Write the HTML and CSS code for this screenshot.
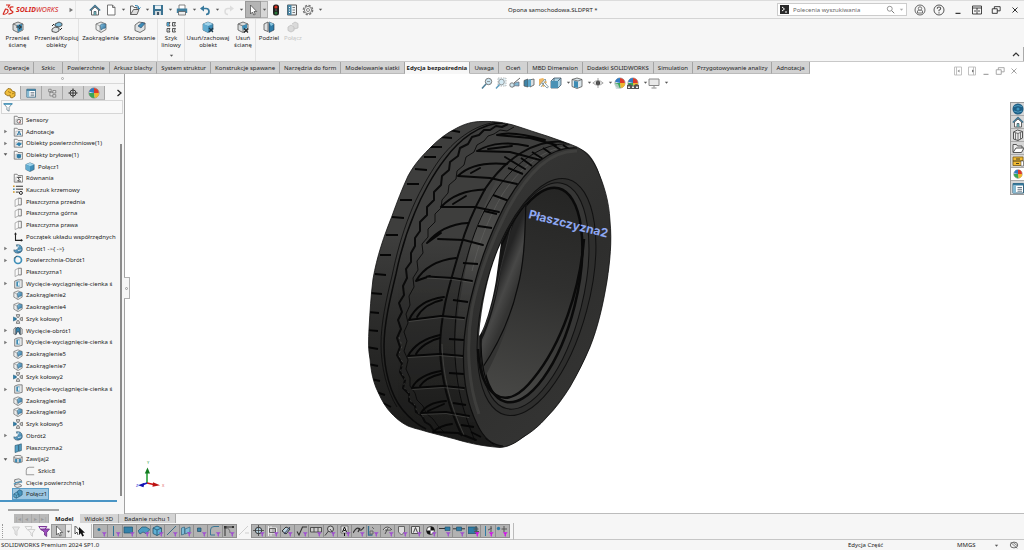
FILE: index.html
```html
<!DOCTYPE html>
<html lang="pl">
<head>
<meta charset="utf-8">
<title>Opona samochodowa.SLDPRT</title>
<link rel="stylesheet" href="styles.css">
</head>
<body>
<svg class="sprite" aria-hidden="true">
  <defs>
    <linearGradient id="gBlue" x1="0" y1="0" x2="1" y2="1"><stop offset="0" stop-color="#8cc6e4"/><stop offset="1" stop-color="#2a6f9c"/></linearGradient>
  </defs>
  <symbol id="cube" viewBox="0 0 12 12"><path d="M1 3l5-2 5 2v6l-5 2.500-5-2.500z" fill="#3f8db8" stroke="#2b4a5e" stroke-width=".6"/><path d="M1 3l5 2 5-2-5-2z" fill="#9fd3ea"/><path d="M1 3l5 2v6.500L1 9z" fill="#62acd0"/></symbol>
  <symbol id="gcube" viewBox="0 0 12 12"><path d="M1 3l5-2 5 2v6l-5 2.500-5-2.500z" fill="#d9dcdd" stroke="#555" stroke-width=".8"/><path d="M1 3l5 2 5-2M6 5v6.500" fill="none" stroke="#666" stroke-width=".8"/></symbol>
  <symbol id="moveface" viewBox="0 0 12 12"><use href="#gcube"/><path d="M5 4l5-1v6l-4 2z" fill="#3c8cb6"/><path d="M4 6h5M7 4l2.500 2L7 8" fill="none" stroke="#222" stroke-width=".9"/></symbol>
  <symbol id="movecopy" viewBox="0 0 12 12"><path d="M1 8l3-2 4 1v3l-3 1.500-4-1z" fill="#dfe3e5" stroke="#333" stroke-width=".8"/><path d="M4 3l4-2 3 1.500v2L8 6 4 5z" fill="#7fbcd9" stroke="#333" stroke-width=".8"/><path d="M1 5l2-2M11 7L9 9" stroke="#222"/></symbol>
  <symbol id="fillet" viewBox="0 0 12 12"><path d="M1 3l5-2 5 2v5.500l-5 3-5-3z" fill="#eceeee" stroke="#666" stroke-width=".8"/><path d="M5 4.500Q6 2 10.500 3v4Q8 7 6 9z" fill="url(#gBlue)" stroke="#2d6080" stroke-width=".6"/><path d="M1 3l4 2v6" fill="none" stroke="#777" stroke-width=".6"/></symbol>
  <symbol id="chamfer" viewBox="0 0 12 12"><path d="M1 4l4-3 6 1v6.500l-5 3-5-2z" fill="#dfe2e3" stroke="#555" stroke-width=".8"/><path d="M4 5l4-3.500 3 1L7 7z" fill="#3e8eb9" stroke="#235" stroke-width=".5"/></symbol>
  <symbol id="lpat" viewBox="0 0 12 12"><g fill="#dfe4e6" stroke="#333" stroke-width=".8"><path d="M2 1.500h3l-1 1.700 1 1.800H2zM7.500 1.500h3l-1 1.700 1 1.800h-3zM2 7.500h3l-1 1.700 1 1.800H2zM7.500 7.500h3l-1 1.700 1 1.800h-3z"/></g><path d="M2 1.500h2v3.500H2z" fill="#4b9bc4"/></symbol>
  <symbol id="delbody" viewBox="0 0 12 12"><use href="#cube"/><path d="M7 7l4 4M11 7l-4 4" stroke="#1d3a4c" stroke-width="1.300"/></symbol>
  <symbol id="delface" viewBox="0 0 12 12"><use href="#gcube"/><path d="M5 5l5-2v4l-4 2z" fill="#3c8cb6"/><path d="M7 7.500l4 4M11 7.500l-4 4" stroke="#222" stroke-width="1.100"/></symbol>
  <symbol id="split" viewBox="0 0 12 12"><path d="M1 3l4-2v9.500L1 9z" fill="#e0e2e3" stroke="#555" stroke-width=".8"/><path d="M6 1l5 2v6l-5 2.500z" fill="#2f7ca8" stroke="#234" stroke-width=".6"/><path d="M6 1l5 2-3 2z" fill="#8cc6e0"/></symbol>
  <symbol id="combineg" viewBox="0 0 12 12"><path d="M1 6l3-2 3 2v3.500L4 11 1 9.500zM5 3l3-2 3 1.500V7L7 8" fill="#dadada" stroke="#c0c0c0" stroke-width=".8"/></symbol>
  <symbol id="combine" viewBox="0 0 12 12"><path d="M5 3l3-2 3 1.500V7L8 9 5 7z" fill="#4694bd" stroke="#1c4c69" stroke-width=".7"/><path d="M1 6l3-2 3 2v3.500L4 11 1 9.500z" fill="#67b0d3" stroke="#1c4c69" stroke-width=".7"/><path d="M1 6l3 1.500L7 6M4 7.500V11" fill="none" stroke="#1c4c69" stroke-width=".6"/></symbol>
  <symbol id="home" viewBox="0 0 12 12"><path d="M2.500 6v5h7V6L6 3z" fill="#fff" stroke="#555" stroke-width=".9"/><path d="M.8 6.500L6 1.500l5.200 5" fill="none" stroke="#3b6f8b" stroke-width="1.400"/><path d="M5 11V7.500h2V11" fill="#7cc" stroke="#345" stroke-width=".7"/></symbol>
  <symbol id="new" viewBox="0 0 12 12"><path d="M2.500 1h5l2.500 2.500V11h-7.500z" fill="#fff" stroke="#666" stroke-width=".9"/><path d="M7.500 1v2.500H10" fill="none" stroke="#666" stroke-width=".9"/></symbol>
  <symbol id="open" viewBox="0 0 12 12"><path d="M1.500 10.500V2h2.500l1 1.500h3V6" fill="#f5f5f5" stroke="#555" stroke-width=".9"/><path d="M1.500 10.500l3-5H10l-2 5z" fill="#ddd" stroke="#555" stroke-width=".9"/><path d="M6 1.500q4-.5 4 3M8.500 3.500l1.500 1.500 1.500-1.500" stroke="#2c7fae" fill="none"/></symbol>
  <symbol id="save" viewBox="0 0 12 12"><path d="M1 1h10v10H1z" fill="#3b7392"/><path d="M3 1.500h6V5H3z" fill="#e9f1f5"/><path d="M3 7h6v4H3z" fill="#cfd8dc"/><path d="M5 8h2v3H5z" fill="#456"/></symbol>
  <symbol id="print" viewBox="0 0 12 12"><path d="M3 5V1h6v4" fill="#fff" stroke="#666" stroke-width=".8"/><path d="M.8 4.500h10.400v4.500H.8z" fill="#3f7f9f"/><path d="M2.500 7.500h7V11h-7z" fill="#eee" stroke="#555" stroke-width=".7"/></symbol>
  <symbol id="undo" viewBox="0 0 12 12"><path d="M2.500 4.500h4.500q3 0 3 3T7 10.500" fill="none" stroke="#37799d" stroke-width="1.700"/><path d="M5 1.500v6L1 4.500z" fill="#37799d"/></symbol>
  <symbol id="redo" viewBox="0 0 12 12"><path d="M9.500 4.500H5q-3 0-3 3t3 3" fill="none" stroke="#ddd" stroke-width="1.500"/><path d="M7 1.500v6l4-3z" fill="#ddd"/></symbol>
  <symbol id="cursor" viewBox="0 0 12 12"><path d="M3.500 1v9l2-2 1.300 3 1.400-.6L7 7.500h2.700z" fill="#fff" stroke="#444" stroke-width=".7"/></symbol>
  <symbol id="cursorset" viewBox="0 0 12 12"><path d="M1 1v8l2-2 1 3" fill="#fff" stroke="#333" stroke-width=".8"/><path d="M1.500 1l4 4.500" stroke="#333" stroke-width=".8"/><path d="M5 2v8l1.800-1.800L8.300 11.500l1.700-.8-1.500-3H11z" fill="#111"/></symbol>
  <symbol id="traffic" viewBox="0 0 12 12"><rect x="3" y=".5" width="6" height="11" rx="2.500" fill="#222"/><circle cx="6" cy="3" r="1.600" fill="#d32"/><circle cx="6" cy="6" r="1" fill="#555"/><circle cx="6" cy="9" r="1.500" fill="#2a7a3a"/></symbol>
  <symbol id="list" viewBox="0 0 12 12"><path d="M1.500 1h9v10h-9z" fill="#eef3f5" stroke="#555"/><path d="M1.500 1h4v10h-4z" fill="#4c87a5"/><path d="M3 3.500h1M3 6h1M3 8.500h1" stroke="#fff"/><path d="M6.500 3.500H9M6.500 6H9M6.500 8.500H9" stroke="#777"/></symbol>
  <symbol id="gear" viewBox="0 0 12 12"><circle cx="6" cy="6" r="4.600" fill="none" stroke="#777" stroke-width="1.500" stroke-dasharray="2.200 1.400"/><circle cx="6" cy="6" r="3.600" fill="#f7f7f7" stroke="#777" stroke-width=".9"/><circle cx="6" cy="6" r="1.500" fill="#fff" stroke="#777" stroke-width=".9"/></symbol>
  <symbol id="arr" viewBox="0 0 6 6"><path d="M1 2h4L3 4.500z" fill="#555"/></symbol>
  <symbol id="tri" viewBox="0 0 6 6"><path d="M1.500 .8v4.400L5 3z" fill="#777"/></symbol>
  <symbol id="trid" viewBox="0 0 6 6"><path d="M.8 1.500h4.400L3 4.500z" fill="#555"/></symbol>
  <symbol id="chev" viewBox="0 0 8 8"><path d="M2.500 1L6 4 2.500 7" fill="none" stroke="#222" stroke-width="1.300"/></symbol>
  <symbol id="mag" viewBox="0 0 12 12"><circle cx="5" cy="5" r="3.300" fill="none" stroke="#777"/><path d="M7.500 7.500l3.500 3.500" stroke="#777" stroke-width="1.300"/></symbol>
  <symbol id="user" viewBox="0 0 12 12"><circle cx="6" cy="6" r="5" fill="none" stroke="#666"/><path d="M3.500 9V7q0-1 2.500-1t2.500 1v2z" fill="none" stroke="#666" stroke-width=".9"/><circle cx="6" cy="4.500" r="1.700" fill="#f7f7f7" stroke="#666" stroke-width=".9"/></symbol>
  <symbol id="help" viewBox="0 0 12 12"><circle cx="6" cy="6" r="5" fill="none" stroke="#555"/><path d="M4.300 4.700Q4.300 3 6 3t1.700 1.500Q7.700 5.500 6 6.300v1M6 8.200v1.200" fill="none" stroke="#555" stroke-width="1.100"/></symbol>
  <symbol id="min" viewBox="0 0 12 12"><path d="M3 10h6" stroke="currentColor" stroke-width="1.300"/></symbol>
  <symbol id="span" viewBox="0 0 12 12"><path d="M1.500 2h9v8h-9zM1.500 4h9M6 4v6M3 7h2M7 7h2" fill="none" stroke="currentColor" stroke-width=".8"/></symbol>
  <symbol id="restore" viewBox="0 0 12 12"><path d="M1.500 4.500h6v5.500h-6zM4 4.500V2h7v5H7.500" fill="none" stroke="currentColor" stroke-width="1"/></symbol>
  <symbol id="close" viewBox="0 0 12 12"><path d="M3 3l6 6M9 3L3 9" stroke="currentColor" stroke-width="1.100"/></symbol>
  <symbol id="dockl" viewBox="0 0 12 12"><path d="M2.500 2h7v8h-7zM4.500 2v8" fill="none" stroke="#bbb" stroke-width=".9"/><path d="M7.500 4.500v3L5.500 6z" fill="#888"/></symbol>
  <symbol id="dockr" viewBox="0 0 12 12"><path d="M2.500 2h7v8h-7zM7.500 2v8" fill="none" stroke="#bbb" stroke-width=".9"/><path d="M6 4.500v3L8 6z" fill="#777"/></symbol>
  <symbol id="zoomfit" viewBox="0 0 12 12"><circle cx="7.500" cy="4.500" r="3.200" fill="#cde6f2" stroke="#777"/><path d="M5 7l-4 4.500" stroke="#4d7d96" stroke-width="1.500"/><path d="M6 4.500h3" stroke="#777" stroke-width=".7"/></symbol>
  <symbol id="zoomarea" viewBox="0 0 12 12"><path d="M3 1h8v8H3z" fill="#e6f3f8" stroke="#aaa" stroke-width=".8" stroke-dasharray="1.500 1"/><circle cx="6.500" cy="5" r="2.800" fill="#d4eaf4" stroke="#888" stroke-width=".8"/><path d="M4.500 7.500l-3.500 4" stroke="#5b9cbd" stroke-width="1.400"/></symbol>
  <symbol id="prevview" viewBox="0 0 12 12"><path d="M3 10q2-5 7-5v4q-4-1-7 1z" fill="#7fb7d2" stroke="#667" stroke-width=".7"/><path d="M11 1L5 6" stroke="#666"/><circle cx="3" cy="8" r="2.200" fill="#cfe5ef" stroke="#666" stroke-width=".8"/></symbol>
  <symbol id="section" viewBox="0 0 12 12"><path d="M1 3.500l4-1.500v8l-4-1z" fill="#3f83a6" stroke="#555" stroke-width=".7"/><path d="M6 3l5-1v6l-4 2z" fill="#d9dfe2" stroke="#555" stroke-width=".8"/><path d="M5 3l3-1v7l-3 1z" fill="#5ba4c8"/></symbol>
  <symbol id="annview" viewBox="0 0 12 12"><path d="M2 2l4-1 4 4-3 5-5-2z" fill="#efb765"/><path d="M2 9l6-7 1 1-5 7M5 6l5 5 1.500-1L8 6" fill="#fff" stroke="#6f8d9b" stroke-width=".8"/></symbol>
  <symbol id="orient" viewBox="0 0 12 12"><path d="M1 4l3-3h7v7l-3 3H1z" fill="#a9d0e2" stroke="#456" stroke-width=".8"/><path d="M1 4h7v7H1z" fill="#4a91b5"/><path d="M8 4l3-3M4 1v3" stroke="#456" stroke-width=".8"/></symbol>
  <symbol id="display" viewBox="0 0 12 12"><path d="M1 2.500L6 1l5 1.500v7L6 11.500 1 9.500z" fill="#dbe5ea" stroke="#555" stroke-width=".8"/><path d="M3 4l4 .6V11l-4-1z" fill="#3e8cb4"/><path d="M1 2.500L7 4l4-1.500" fill="none" stroke="#555" stroke-width=".7"/></symbol>
  <symbol id="eye" viewBox="0 0 12 12"><path d="M.8 6Q6 1 11.200 6 6 10.500.8 6z" fill="#e5e5e5" stroke="#999" stroke-width=".8"/><circle cx="6" cy="6" r="2.200" fill="#444"/><path d="M6 1v10" stroke="#777" stroke-width=".7"/></symbol>
  <symbol id="ball" viewBox="0 0 12 12"><circle cx="6" cy="6" r="5" fill="#fff" stroke="#555" stroke-width=".6"/><path d="M6 6L6 1A5 5 0 0 0 1.200 5z" fill="#2f7cc4"/><path d="M6 6V1a5 5 0 0 1 4.800 5z" fill="#dc3a2b"/><path d="M6 6h5a5 5 0 0 1-4.500 5z" fill="#f0b62c"/><path d="M6 6L1 6a5 5 0 0 0 5.500 5z" fill="#3aa556"/></symbol>
  <symbol id="ballp" viewBox="0 0 12 12"><use href="#ball"/><path d="M0 6l4 1 2 5H2z" fill="#c7d4da" opacity=".8"/></symbol>
  <symbol id="scene" viewBox="0 0 12 12"><use href="#ball"/><path d="M0 8l3-1 3 2 3-2 3 1v4H0z" fill="#555"/><path d="M1 9.500h2v1.500H1zM5 9.500h2v1.500H5zM9 9.500h2v1.500H9z" fill="#eee"/></symbol>
  <symbol id="monitor" viewBox="0 0 12 12"><path d="M1 2h10v6.500H1z" fill="#e9e9e9" stroke="#888"/><path d="M6 8.500v2M3.500 11h5" stroke="#888"/></symbol>
  <symbol id="part" viewBox="0 0 12 12"><path d="M1 5l3-3.500 3 .5 1 2 3 1v4l-3 2-2-1V8L4 9 1 7z" fill="#f0bd3c" stroke="#8b6410" stroke-width=".8"/><path d="M4 4.500l3 1.500M8 7l2-1" stroke="#8b6410" stroke-width=".7"/></symbol>
  <symbol id="conf" viewBox="0 0 12 12"><path d="M2 1.500h3v3H2zM7 3h3.500v3H7zM7 8h3.500v3H7zM3.500 4.500v5H7M3.500 5H7" fill="#e3e3e3" stroke="#666" stroke-width=".8"/></symbol>
  <symbol id="target" viewBox="0 0 12 12"><circle cx="6" cy="6" r="3.600" fill="none" stroke="#222"/><path d="M6 .5v11M.5 6h11" stroke="#222"/></symbol>
  <symbol id="funnelb" viewBox="0 0 12 12"><path d="M1 2h10L7.300 6.500V11l-2.600-1.500v-3z" fill="#fff" stroke="#4c6675" stroke-width=".8"/><path d="M.8 1.500h10.400v1.800H.8z" fill="#3d93bd"/></symbol>
  <symbol id="fold" viewBox="0 0 12 12"><path d="M1.500 11V1.500h3.500l1 1.500h5.500v8z" fill="#fafafa" stroke="#666" stroke-width=".9"/><path d="M3.500 11V5h8" fill="none" stroke="#999" stroke-width=".7"/></symbol>
  <symbol id="fsens" viewBox="0 0 12 12"><use href="#fold"/><circle cx="7" cy="7.500" r="2.200" fill="#fff" stroke="#555"/><path d="M7 7.500l2 2" stroke="#c33"/></symbol>
  <symbol id="fann" viewBox="0 0 12 12"><use href="#fold"/><path d="M5 10l2.300-5 2.300 5M6 8.500h3" fill="none" stroke="#246f9b" stroke-width="1.100"/></symbol>
  <symbol id="fsurf" viewBox="0 0 12 12"><use href="#fold"/><path d="M3.500 7.500L7 5l4 2-3.500 3z" fill="#2f81ad"/></symbol>
  <symbol id="fsol" viewBox="0 0 12 12"><use href="#fold"/><path d="M4.500 5.500L7 4.700l2.800.8v3.500L7 10.300 4.500 9z" fill="#2f7ba5"/></symbol>
  <symbol id="feq" viewBox="0 0 12 12"><use href="#fold"/><path d="M9.500 5.200h-4L7.500 7.500 5.500 9.700h4" fill="none" stroke="#222"/></symbol>
  <symbol id="mat" viewBox="0 0 12 12"><path d="M0 1.500h2M0 8.500h2" stroke="#d19a2a" stroke-width="1.800"/><path d="M0 5h2" stroke="#3d86ad" stroke-width="1.800"/><path d="M3.500 1.500H12M3.500 5H12M3.500 8.500H7" stroke="#333" stroke-width="1.200"/><circle cx="9.500" cy="9.500" r="1.800" fill="#fff" stroke="#222" stroke-width="1.200"/></symbol>
  <symbol id="plane" viewBox="0 0 12 12"><path d="M2.500 3.500l4-2v8l-4 2z" fill="#fafafa" stroke="#999" stroke-width=".9"/><path d="M6.500 1.500H10v8H6.500" fill="none" stroke="#666" stroke-width="1"/></symbol>
  <symbol id="planeb" viewBox="0 0 12 12"><path d="M2.500 3l4-1v8l-4 1.500zM7 2l3-1v8L7 10z" fill="#55a2c8" stroke="#245570" stroke-width=".8"/></symbol>
  <symbol id="origin" viewBox="0 0 12 12"><path d="M3 1.500V10h8" fill="none" stroke="#222" stroke-width="1.300"/><path d="M1.300 3L3 .2 4.700 3zM9.500 8.300L12 10l-2.500 1.700z" fill="#222"/></symbol>
  <symbol id="revolve" viewBox="0 0 12 12"><path d="M4 1q6-1 7 4t-5 6q-5 0-5-4 4 1 5-2Q5 4 4 1z" fill="url(#gBlue)" stroke="#2b4c60" stroke-width=".7"/><path d="M2 6.500Q6 6 6.500 2" fill="none" stroke="#fff"/><path d="M6 8l4-1" stroke="#dceef6"/></symbol>
  <symbol id="surfrev" viewBox="0 0 12 12"><circle cx="6" cy="6" r="4.200" fill="none" stroke="#3f8fb8" stroke-width="2"/><path d="M4 3q4 0 4 4" fill="none" stroke="#fff"/><path d="M1 4L5 1" stroke="#333" stroke-width=".8"/></symbol>
  <symbol id="cutex" viewBox="0 0 12 12"><path d="M2 2.500l4-1.500h5v9l-4 1H2z" fill="#e4e6e7" stroke="#555" stroke-width=".8"/><path d="M4 3h4v6H4z" fill="#3f8cb4"/><path d="M6 4h2v4H6z" fill="#e8f2f6"/></symbol>
  <symbol id="cpat" viewBox="0 0 12 12"><g fill="#e6e6e6" stroke="#444" stroke-width=".8"><path d="M4 .8h4L7 4H5zM4 11.200h4L7 8H5zM11.300 4v4L8.500 7V5z"/></g><path d="M.3 3.500v5L4 7V5z" fill="#2e7fab" stroke="#1c4c69" stroke-width=".5"/></symbol>
  <symbol id="cutrev" viewBox="0 0 12 12"><path d="M1 3.500l2.500-2v9l-2.500-1zM11 3.500l-2.500-2v9l2.500-1z" fill="#dfe3e5" stroke="#555" stroke-width=".8"/><path d="M3.500 10V3Q6 0 8.500 3v7L6 6z" fill="#3a86ae" stroke="#234" stroke-width=".7"/></symbol>
  <symbol id="wrap" viewBox="0 0 12 12"><path d="M1 3.500v6Q6 12 11 9.500v-6" fill="#d9dddf" stroke="#555" stroke-width=".8"/><ellipse cx="6" cy="3.500" rx="5" ry="1.800" fill="#f3f3f3" stroke="#555" stroke-width=".8"/><path d="M2.500 6h2.500v4H2.500zM7 6h2.500v4H7z" fill="#3a8ab4"/></symbol>
  <symbol id="sketch" viewBox="0 0 12 12"><path d="M11 1.500H5Q1.500 1.500 1.500 5v5.500H11" fill="none" stroke="#888"/></symbol>
  <symbol id="surfcut" viewBox="0 0 12 12"><path d="M2 2l5-1 3 1.500v2L5 6 2 5zM2 8l5-1 3 1.500v1.500l-5 1.500L2 10z" fill="#e3e5e6" stroke="#555" stroke-width=".8"/><path d="M1 7.500q5-4 10-2.500" fill="none" stroke="#3a8ab4" stroke-width="1.300"/></symbol>
  <symbol id="globe" viewBox="0 0 12 12"><circle cx="6" cy="6" r="5.500" fill="#1f5f86"/><path d="M2 3.500q4-2 8 0M2 8q4 2.500 8 0" stroke="#4f9cc0" fill="none"/><circle cx="6" cy="6" r="1.500" fill="#3d95bf"/></symbol>
  <symbol id="lib" viewBox="0 0 12 12"><path d="M1.500 3l4-2 5 1.500V9l-4.500 2.500-4.500-1.500z" fill="#e8e8e8" stroke="#555"/><path d="M1.500 3l4.500 1.500 4.500-2M6 4.500v7M3.500 4v7M8.500 3.500V10" stroke="#555" fill="none" stroke-width=".8"/></symbol>
  <symbol id="folder" viewBox="0 0 12 12"><path d="M1 10V2.500h3.500l1 1.500H10v2" fill="#eee" stroke="#555"/><path d="M1 10.500l3-4.500h8l-2.500 4.500z" fill="#fff" stroke="#555"/></symbol>
  <symbol id="palette" viewBox="0 0 12 12"><path d="M1 2h10v8.500H1z" fill="#f1bb35" stroke="#7b5a14" stroke-width=".8"/><path d="M1 6h10M4 4h4M4 8.500h3" stroke="#4c4120"/><path d="M9 6h2.500v5H9z" fill="#fff" stroke="#555" stroke-width=".6"/></symbol>
  <symbol id="props" viewBox="0 0 12 12"><path d="M1 1.500h10.500v9.500H1z" fill="#fff" stroke="#35647e"/><path d="M1 1.500h10.500v2H1z" fill="#35799d"/><path d="M1 3.500h3V11H1z" fill="#85b9d2"/><path d="M5.500 5.500h4.500M5.500 7.300h4.500M5.500 9.200h4.500" stroke="#456" stroke-width=".8"/></symbol>
  <symbol id="fg" viewBox="0 0 12 12"><path d="M2.500 2h7L7 6v4.500L5 9V6z" fill="#e9e9e9" stroke="#d0d0d0"/></symbol>
  <symbol id="fgs" viewBox="0 0 12 12"><path d="M1 1.500h7L6.500 5M1 1.500l3 4M4 4.500h7L8.500 8v3.500L7 10V8z" fill="#f4f4f4" stroke="#d0d0d0"/></symbol>
  <symbol id="fp" viewBox="0 0 12 12"><path d="M.8 1.500h8L7 4.500M.8 1.500L3.500 5.500" fill="#e2c5ee" stroke="#7b3597"/><path d="M3 4h8.500L8.700 7.500v4L6.500 10V7.500z" fill="#9b4bbb" stroke="#5f2379" stroke-width=".7"/></symbol>
  <symbol id="pf" viewBox="0 0 12 12"><path d="M6.800 7.200h4.900L9.900 9.300v2.500L8.600 11V9.300z" fill="#a04fd0"/></symbol>
  <symbol id="pm" viewBox="0 0 12 12"><path d="M6.800 7.200h4.900L9.900 9.300v2.500L8.600 11V9.300z" fill="#d010e8"/></symbol>
  <symbol id="k1" viewBox="0 0 12 12"><circle cx="4" cy="4.500" r="1.500" fill="#2e7396"/><use href="#pf"/></symbol>
  <symbol id="k2" viewBox="0 0 12 12"><path d="M4.500 1v10" stroke="#2e7396"/><use href="#pf"/></symbol>
  <symbol id="k3" viewBox="0 0 12 12"><path d="M1 2h8.500v6H1z" fill="#3382aa" stroke="#24546d" stroke-width=".7"/><use href="#pf"/></symbol>
  <symbol id="k4" viewBox="0 0 12 12"><path d="M0 6l4-4 4 0 4 2.500-4 4-3-1.500-3 2z" fill="#4b9bc1" stroke="#24546d" stroke-width=".7"/><use href="#pf"/></symbol>
  <symbol id="k5" viewBox="0 0 12 12"><path d="M1 3l4-2 4.500 2v5L5 10.500 1 8.500z" fill="#5fb0d4" stroke="#24546d" stroke-width=".8"/><path d="M1 3l4 2 4.500-2M5 5v5.500" fill="none" stroke="#24546d" stroke-width=".8"/><use href="#pf"/></symbol>
  <symbol id="k6" viewBox="0 0 12 12"><path d="M1 10L10 1" stroke="#3c6d86"/><use href="#pf"/></symbol>
  <symbol id="k7" viewBox="0 0 12 12"><path d="M1.500 3l3-1v7l-3 1zM5 4l5-2v5l-5 2z" fill="#7fbbd7" stroke="#3c6d86" stroke-width=".8"/><use href="#pf"/></symbol>
  <symbol id="k8" viewBox="0 0 12 12"><path d="M2.500 3h3.500v3.500H2.500z" fill="#3d86ab" stroke="#1f4d66" stroke-width=".7"/><use href="#pf"/></symbol>
  <symbol id="k9" viewBox="0 0 12 12"><path d="M10 1.500H5Q1.500 1.500 1.500 5v5H6" fill="none" stroke="#3c7796"/><use href="#pf"/></symbol>
  <symbol id="k10" viewBox="0 0 12 12"><path d="M2 11V2h8.500" fill="none" stroke="#333"/><path d="M1 1h2.500v2.500H1zM9 1h2v2H9z" fill="#333"/><path d="M3 3q4 0 4 5" fill="none" stroke="#555" stroke-width=".7"/><use href="#pf"/></symbol>
  <symbol id="k11" viewBox="0 0 12 12"><path d="M1 10L10 1M7 8h4" stroke="#cfcfcf"/></symbol>
  <symbol id="k12" viewBox="0 0 12 12"><circle cx="5.500" cy="5.500" r="3.200" fill="#b9d6e4" stroke="#333"/><path d="M5.500 0v11M0 5.500h11" stroke="#333" stroke-width=".7"/><use href="#pf"/></symbol>
  <symbol id="k13" viewBox="0 0 12 12"><path d="M1.500 1v10M1.500 3h8v5h-8M4 1v10" fill="none" stroke="#eee"/><path d="M2.500 3.500h6v4h-6z" fill="none" stroke="#444" stroke-width=".8"/><use href="#pf"/></symbol>
  <symbol id="k14" viewBox="0 0 12 12"><path d="M1 6l4-4 4 2-4 5z" fill="#bcd3de" stroke="#333"/><path d="M3 9L9 2" stroke="#346"/><use href="#pf"/></symbol>
  <symbol id="k15" viewBox="0 0 12 12"><path d="M1 6.500l2 3.500L6.500 2H11" fill="none" stroke="#333" stroke-width="1.100"/><use href="#pf"/></symbol>
  <symbol id="k16" viewBox="0 0 12 12"><path d="M.5 2.500h11v4.500H.5zM4 2.500V7M8 2.500V7" fill="#ccc" stroke="#444" stroke-width=".9"/><use href="#pf"/></symbol>
  <symbol id="k17" viewBox="0 0 12 12"><circle cx="6.500" cy="4" r="3" fill="#d2d2d2" stroke="#444"/><path d="M4.500 6L1 10.500M6 4l3 4" stroke="#444"/><use href="#pf"/></symbol>
  <symbol id="k18" viewBox="0 0 12 12"><path d="M2 1h7v7H2z" fill="#ddd" stroke="#555" stroke-width=".7"/><path d="M3.500 7l2-5 2 5M4.500 5.500h2M5.500 8v3" fill="none" stroke="#111"/><use href="#pf"/></symbol>
  <symbol id="k19" viewBox="0 0 12 12"><path d="M0 8q4-7 6-4t5-2M5 7l2-4" fill="none" stroke="#333" stroke-width="1.200"/><use href="#pf"/></symbol>
  <symbol id="k20" viewBox="0 0 12 12"><path d="M1.500 1v9h4" fill="none" stroke="#346d8c" stroke-width="1.300"/><path d="M3 6h3v3H3zM5 2l2 2" fill="none" stroke="#666"/><use href="#pf"/></symbol>
  <symbol id="k21" viewBox="0 0 12 12"><path d="M1 5q4-6 9 0M3 5h6M3 9l3-6" fill="#ddd" stroke="#444" stroke-width=".9"/><use href="#pf"/></symbol>
  <symbol id="k22" viewBox="0 0 12 12"><path d="M2.500 1.500h6V7l-3 3-3-3z" fill="#ddd" stroke="#666"/><use href="#pf"/></symbol>
  <symbol id="k23" viewBox="0 0 12 12"><path d="M1.500 1.500h8v7h-8z" fill="#e2e2e2" stroke="#555"/><path d="M3.500 7.500l2-5 2 5" fill="none" stroke="#444"/><use href="#pf"/></symbol>
  <symbol id="k24" viewBox="0 0 12 12"><circle cx="5.500" cy="5.500" r="4" fill="#fff" stroke="#222" stroke-width=".8"/><path d="M5.500 5.500v-4a4 4 0 0 1 4 4zM5.500 5.500v4a4 4 0 0 1-4-4z" fill="#111"/><use href="#pf"/></symbol>
  <symbol id="k25" viewBox="0 0 12 12"><path d="M0 3.500h7" stroke="#333"/><path d="M6 2h5v3.500H6z" fill="#2f7ca5" stroke="#1f4d66" stroke-width=".6"/><use href="#pf"/></symbol>
  <symbol id="k26" viewBox="0 0 12 12"><path d="M0 3.800h12" stroke="#333"/><path d="M3.500 2h5v3.700h-5z" fill="#2f7ca5" stroke="#1f4d66" stroke-width=".6"/><use href="#pf"/></symbol>
  <symbol id="k27" viewBox="0 0 12 12"><path d="M0 2h9v6.500H0z" fill="#2f7ca5" stroke="#1f4d66" stroke-width=".7"/><path d="M8 1v8M5.500 4h5M6 6.500h5" stroke="#555"/><use href="#pm"/></symbol>
  <symbol id="k28" viewBox="0 0 12 12"><path d="M3.500 1v10" stroke="#2f7ca5"/><path d="M9 1v6M6 5l4-2" stroke="#555"/><use href="#pm"/></symbol>
  <symbol id="k29" viewBox="0 0 12 12"><circle cx="2.500" cy="3.500" r="1.700" fill="#2f7ca5"/><path d="M8 1v6M5.500 4H11" stroke="#555"/><use href="#pm"/></symbol>
</svg>

<header class="titlebar">
  <div class="brand">
    <svg class="ds" viewBox="0 0 12 12" aria-hidden="true"><path d="M4 1h3.500L6 3.500M1 10.500L3.500 5q3 0 2.500 2.500T1 10.500M11.500 3q-4-.5-3.500 1.500t2.500 3-4 2.700" fill="none" stroke="#d5281e" stroke-width="1.200"/></svg>
    <span class="solid">SOLID</span><span class="works">WORKS</span>
  </div>
  <button class="more" aria-label="Menu"><svg class="i6"><use href="#tri"/></svg></button>
  <nav class="quick" aria-label="Szybki dostęp">
    <button class="ic" aria-label="Początek"><svg class="i12"><use href="#home"/></svg></button>
    <div class="pairs">
      <button><svg class="i12"><use href="#new"/></svg><svg class="i5"><use href="#arr"/></svg></button>
      <button><svg class="i12"><use href="#open"/></svg><svg class="i5"><use href="#arr"/></svg></button>
      <button><svg class="i12"><use href="#save"/></svg><svg class="i5"><use href="#arr"/></svg></button>
      <button><svg class="i12"><use href="#print"/></svg><svg class="i5"><use href="#arr"/></svg></button>
      <button><svg class="i12"><use href="#undo"/></svg><svg class="i5"><use href="#arr"/></svg></button>
      <button disabled><svg class="i12"><use href="#redo"/></svg><svg class="i5"><use href="#arr"/></svg></button>
    </div>
    <button class="sel"><svg class="i12"><use href="#cursor"/></svg></button><button class="seldrop"><svg class="i5"><use href="#arr"/></svg></button>
    <button class="ic"><svg class="i12"><use href="#traffic"/></svg></button>
    <button class="ic"><svg class="i12"><use href="#list"/></svg></button>
    <button class="ic"><svg class="i12"><use href="#gear"/></svg></button>
    <button class="geard"><svg class="i5"><use href="#arr"/></svg></button>
  </nav>
  <h1 class="doc">Opona samochodowa.SLDPRT *</h1>
  <div class="search">
    <svg class="i9" viewBox="0 0 9 9" aria-hidden="true"><path d="M0 0h9v9H0z" fill="#2a2a2a"/><path d="M2 2l2.500 2L2 6M5 7h2" fill="none" stroke="#fff"/></svg>
    <input type="text" aria-label="Polecenia wyszukiwania" placeholder="Polecenia wyszukiwania">
    <svg class="i9"><use href="#mag"/></svg><svg class="i5 dim"><use href="#arr"/></svg>
  </div>
  <div class="winctl">
    <button aria-label="Konto"><svg class="i12"><use href="#user"/></svg></button>
    <button aria-label="Pomoc"><svg class="i12"><use href="#help"/></svg></button>
    <button aria-label="Minimalizuj"><svg class="i10"><use href="#min"/></svg></button>
    <button aria-label="Rozciągnij"><svg class="i12"><use href="#span"/></svg></button>
    <button aria-label="Przywróć"><svg class="i10"><use href="#restore"/></svg></button>
    <button aria-label="Zamknij"><svg class="i10"><use href="#close"/></svg></button>
  </div>
</header>

<section class="ribbon">
  <div class="rgroup">
    <button class="rb w35"><svg class="i12"><use href="#moveface"/></svg><span>Przenieś<br>ścianę</span></button>
    <button class="rb w42"><svg class="i12"><use href="#movecopy"/></svg><span>Przenieś/Kopiuj<br>obiekty</span></button>
  </div>
  <div class="rgroup">
    <button class="rb w42"><svg class="i12"><use href="#fillet"/></svg><span>Zaokrąglenie</span></button>
    <button class="rb w35"><svg class="i12"><use href="#chamfer"/></svg><span>Sfazowanie</span></button>
  </div>
  <div class="rgroup">
    <button class="rb w26"><svg class="i12"><use href="#lpat"/></svg><span>Szyk<br>liniowy</span><svg class="i5 rdrop"><use href="#arr"/></svg></button>
  </div>
  <div class="rgroup">
    <button class="rb w46"><svg class="i12"><use href="#delbody"/></svg><span>Usuń/zachowaj<br>obiekt</span></button>
    <button class="rb w24"><svg class="i12"><use href="#delface"/></svg><span>Usuń<br>ścianę</span></button>
  </div>
  <div class="rgroup last">
    <button class="rb w24"><svg class="i12"><use href="#split"/></svg><span>Podziel</span></button>
    <button class="rb w24" disabled><svg class="i12"><use href="#combineg"/></svg><span>Połącz</span></button>
  </div>
  <button class="collapse" aria-label="Zwiń"><svg class="i8" viewBox="0 0 8 8"><path d="M1 6l3-3 3 3" fill="none" stroke="#333" stroke-width="1.200"/></svg></button>
</section>

<main class="work">
  <nav class="tabs" role="tablist">
    <button role="tab">Operacje</button><button role="tab">Szkic</button><button role="tab">Powierzchnie</button><button role="tab">Arkusz blachy</button><button role="tab">System struktur</button><button role="tab">Konstrukcje spawane</button><button role="tab">Narzędzia do form</button><button role="tab">Modelowanie siatki</button><button role="tab" class="on" aria-selected="true">Edycja bezpośrednia</button><button role="tab">Uwaga</button><button role="tab">Oceń</button><button role="tab">MBD Dimension</button><button role="tab">Dodatki SOLIDWORKS</button><button role="tab">Simulation</button><button role="tab">Przygotowywanie analizy</button><button role="tab">Adnotacja</button>
  </nav>
  <div class="split">
    <aside class="panel">
      <div class="grip"><i></i></div>
      <div class="ptabs">
        <button class="on"><svg class="i12"><use href="#part"/></svg></button><button><svg class="i10"><use href="#props"/></svg></button><button><svg class="i10"><use href="#conf"/></svg></button><button><svg class="i10"><use href="#target"/></svg></button><button><svg class="i12"><use href="#ball"/></svg></button>
        <button class="pmore" aria-label="Więcej"><svg class="i8"><use href="#chev"/></svg></button>
      </div>
      <div class="filter"><svg class="i10"><use href="#funnelb"/></svg></div>
      <div class="treebox">
        <div class="tree" role="tree">
          <div class="row" role="treeitem"><b></b><svg class="i10"><use href="#fsens"/></svg><span>Sensory</span></div>
          <div class="row" role="treeitem"><b><svg class="i5"><use href="#tri"/></svg></b><svg class="i10"><use href="#fann"/></svg><span>Adnotacje</span></div>
          <div class="row" role="treeitem"><b><svg class="i5"><use href="#tri"/></svg></b><svg class="i10"><use href="#fsurf"/></svg><span>Obiekty powierzchniowe(1)</span></div>
          <div class="row" role="treeitem"><b><svg class="i5"><use href="#trid"/></svg></b><svg class="i10"><use href="#fsol"/></svg><span>Obiekty bryłowe(1)</span></div>
          <div class="row kid" role="treeitem"><b></b><svg class="i10"><use href="#cube"/></svg><span>Połącz1</span></div>
          <div class="row" role="treeitem"><b></b><svg class="i10"><use href="#feq"/></svg><span>Równania</span></div>
          <div class="row" role="treeitem"><b></b><svg class="i10"><use href="#mat"/></svg><span>Kauczuk krzemowy</span></div>
          <div class="row" role="treeitem"><b></b><svg class="i10"><use href="#plane"/></svg><span>Płaszczyzna przednia</span></div>
          <div class="row" role="treeitem"><b></b><svg class="i10"><use href="#plane"/></svg><span>Płaszczyzna górna</span></div>
          <div class="row" role="treeitem"><b></b><svg class="i10"><use href="#plane"/></svg><span>Płaszczyzna prawa</span></div>
          <div class="row" role="treeitem"><b></b><svg class="i10"><use href="#origin"/></svg><span>Początek układu współrzędnych</span></div>
          <div class="row" role="treeitem"><b><svg class="i5"><use href="#tri"/></svg></b><svg class="i10"><use href="#revolve"/></svg><span>Obrót1 -&gt;{ -&gt;}</span></div>
          <div class="row" role="treeitem"><b><svg class="i5"><use href="#tri"/></svg></b><svg class="i10"><use href="#surfrev"/></svg><span>Powierzchnia-Obrót1</span></div>
          <div class="row" role="treeitem"><b></b><svg class="i10"><use href="#plane"/></svg><span>Płaszczyzna1</span></div>
          <div class="row" role="treeitem"><b><svg class="i5"><use href="#tri"/></svg></b><svg class="i10"><use href="#cutex"/></svg><span>Wycięcie-wyciągnięcie-cienka ś</span></div>
          <div class="row" role="treeitem"><b></b><svg class="i10"><use href="#fillet"/></svg><span>Zaokrąglenie2</span></div>
          <div class="row" role="treeitem"><b></b><svg class="i10"><use href="#fillet"/></svg><span>Zaokrąglenie4</span></div>
          <div class="row" role="treeitem"><b></b><svg class="i10"><use href="#cpat"/></svg><span>Szyk kołowy1</span></div>
          <div class="row" role="treeitem"><b><svg class="i5"><use href="#tri"/></svg></b><svg class="i10"><use href="#cutrev"/></svg><span>Wycięcie-obrót1</span></div>
          <div class="row" role="treeitem"><b><svg class="i5"><use href="#tri"/></svg></b><svg class="i10"><use href="#cutex"/></svg><span>Wycięcie-wyciągnięcie-cienka ś</span></div>
          <div class="row" role="treeitem"><b></b><svg class="i10"><use href="#fillet"/></svg><span>Zaokrąglenie5</span></div>
          <div class="row" role="treeitem"><b></b><svg class="i10"><use href="#fillet"/></svg><span>Zaokrąglenie7</span></div>
          <div class="row" role="treeitem"><b></b><svg class="i10"><use href="#cpat"/></svg><span>Szyk kołowy2</span></div>
          <div class="row" role="treeitem"><b><svg class="i5"><use href="#tri"/></svg></b><svg class="i10"><use href="#cutex"/></svg><span>Wycięcie-wyciągnięcie-cienka ś</span></div>
          <div class="row" role="treeitem"><b></b><svg class="i10"><use href="#fillet"/></svg><span>Zaokrąglenie8</span></div>
          <div class="row" role="treeitem"><b></b><svg class="i10"><use href="#fillet"/></svg><span>Zaokrąglenie9</span></div>
          <div class="row" role="treeitem"><b></b><svg class="i10"><use href="#cpat"/></svg><span>Szyk kołowy5</span></div>
          <div class="row" role="treeitem"><b><svg class="i5"><use href="#tri"/></svg></b><svg class="i10"><use href="#revolve"/></svg><span>Obrót2</span></div>
          <div class="row" role="treeitem"><b></b><svg class="i10"><use href="#planeb"/></svg><span>Płaszczyzna2</span></div>
          <div class="row" role="treeitem"><b><svg class="i5"><use href="#trid"/></svg></b><svg class="i10"><use href="#wrap"/></svg><span>Zawijaj2</span></div>
          <div class="row kid" role="treeitem"><b></b><svg class="i10"><use href="#sketch"/></svg><span>Szkic8</span></div>
          <div class="row" role="treeitem"><b></b><svg class="i10"><use href="#surfcut"/></svg><span>Cięcie powierzchnią1</span></div>
          <div class="row" role="treeitem" aria-selected="true"><b></b><div class="picked"><svg class="i10"><use href="#combine"/></svg><span>Połącz1</span></div></div>
        </div>
        <div class="vbar"></div>
      </div>
      <div class="hbar"><i></i></div>
    </aside>

    <section class="view">
      <svg class="canvas" viewBox="125 75 899 439" preserveAspectRatio="xMidYMid meet" role="img" aria-label="Opona">
        <defs>
          <linearGradient id="body" x1="0" y1="0" x2="0" y2="1"><stop offset="0" stop-color="#3e3e3d"/><stop offset=".35" stop-color="#3e3e3d"/><stop offset=".6" stop-color="#2c2c2b"/><stop offset="1" stop-color="#191918"/></linearGradient>
          <linearGradient id="side" x1=".3" y1="0" x2=".7" y2="1"><stop offset="0" stop-color="#363635"/><stop offset=".5" stop-color="#2e2e2d"/><stop offset="1" stop-color="#353534"/></linearGradient>
          <linearGradient id="deck" x1="0" y1="0" x2="0" y2="1"><stop offset="0" stop-color="#252524"/><stop offset=".45" stop-color="#30302f"/><stop offset="1" stop-color="#484846"/></linearGradient>
          <linearGradient id="bead" gradientUnits="userSpaceOnUse" x1="497" y1="280" x2="517" y2="288"><stop offset="0" stop-color="#242424"/><stop offset=".5" stop-color="#484847"/><stop offset="1" stop-color="#343433"/></linearGradient>
          <linearGradient id="shoulder" gradientUnits="userSpaceOnUse" x1="0" y1="150" x2="0" y2="430"><stop offset="0" stop-color="#3b3b3a"/><stop offset=".35" stop-color="#555553"/><stop offset=".55" stop-color="#3b3b3a"/><stop offset="1" stop-color="#1e1e1d"/></linearGradient>
          <clipPath id="hole"><ellipse cx="532" cy="296" rx="44" ry="110" transform="rotate(14 532 296)"/></clipPath>
          <clipPath id="sil"><path id="outline" d="M482 122.500C496 122 505 124 513 126C526 130 537 134 547 137C558 141 568 144 577 148C587 153 592 160 597 170C604 186 609 202 610 222C612 243 610 262 607 282C603 306 598 328 590 348C584 362 578 374 570 388C563 399 556 409 547 418C539 427 532 433 523 438C516 444 508 448 500 448.500C480 447 465 443 455 440L428 433C418 430 413 429 408 427C400 423 396 419 392 415C386 409 382 402 378 393C373 383 371 372 370 360C368 350 368.500 340 369 330C370 312 371 296 373 280C377 257 384 237 392 217C397 203 402 190 408 177C415 164 423 156 432 147C439 140 447 134 455 130C464 125 472 122.500 482 122.500Z"/></clipPath>
        </defs>
        <use href="#outline" fill="url(#body)"/>
        <g clip-path="url(#sil)" fill="none" stroke-linejoin="round">
          <path d="M577 150C548 150 524 174 507 205C491 233 480 262 473 290C466 318 464 335 463 353C463 378 468 400 478 422L468 424C456 395 454 372 455 345C456 325 460 298 466 268C473 235 484 205 497 180C511 154 535 140 560 143Z" fill="url(#shoulder)" opacity=".75"/>
          <g stroke="#0b0b0b">
            <path d="M505 124C480 123 458 142 445 160C433 175 421 198 415 213C407 232 400 255 396 275C390 300 384 325 384 347C384 370 390 395 402 410C410 420 418 426 426 430" stroke-width="1.500"/>
            <path d="M500 123C474 124 452 144 440 160C429 175 416 199 410 215C402 235 396 257 392 277C386 301 381 325 381 345C381 368 387 392 397 408" stroke-width=".8"/>
            <path d="M508 125L502 128L496 127L490 131L484 131L479 136L472 138L468 145L460 149L458 157L450 163L449 171L442 177L441 186L434 193L434 201L427 208L427 216L420 223L420 232L415 239L415 247L411 254L411 263L406 270L407 279L403 287L404 296L399 304L402 313L398 321L401 330L397 339L400 348L397 356L402 365L400 373L405 381L403 389L409 395L409 402L415 407L416 413L422 417L425 423L430 426L434 432" stroke-width="2"/>
            <path d="M514 128L507 132L500 131L494 135L488 137L484 142L477 146L474 153L466 158L464 166L457 172L456 180L449 186L448 194L442 201L441 209L435 215L435 223L428 230L428 238L422 245L423 254L417 262L418 271L413 279L414 288L409 297L410 306L406 315L408 324L404 333L407 342L404 352L408 361L406 370L410 379L410 387L415 394L417 401L423 407L426 414L433 420L438 427L445 434" stroke-width=".9"/>
            <path d="M566 143C535 139 505 160 485 190C475 208 466 228 460 250C454 270 448 290 445 305C442 320 440 335 440 350C441 378 447 405 462 437" stroke-width="2"/>
            <path d="M570 145C543 143 516 163 497 190C485 208 476 228 470 248C463 272 458 292 456 315C454 340 454 360 458 385C461 405 467 422 475 442" stroke-width="1"/>
            <path d="M573 147C545 148 520 168 502 196C488 220 478 246 472 272" stroke="#6a6a68" stroke-width="1" opacity=".5"/>
          </g>
          <g stroke="#080808" stroke-width="1.900" stroke-linecap="round" stroke-linejoin="round">
            <path d="M497 136C510 132 528 136 545 141M497 136L530 139L556 146"/>
            <path d="M477 152C492 143 512 143 528 147M477 152L510 153L540 161M488 150L512 147"/>
            <path d="M458 177C468 167 485 163 507 165M458 177L490 179L517 185M471 174L480 169M505 158L525 170"/>
            <path d="M441 208C452 196 466 191 485 190.500M441 208L475 208L499 213M453 205L466 197"/>
            <path d="M427 244C437 232 449 225 468 224M438 240L464 241L483 246M427 244L441 234"/>
            <path d="M416 282C424 268 438 261 456 259M427 277.500L453 279L472 282M416 282L430 277"/>
            <path d="M409 321C415 308 427 300 444 298M409 321L441 317L464 319M417 318C422 309 432 303 442 301"/>
            <path d="M408 357C414 346 426 339 440 336M408 357L440 355L463 357M416 355C420 348 430 341 440 339"/>
            <path d="M412 389C416 380 428 374 441 372M412 389L443 387L464 389M420 387C424 381 432 377 441 375"/>
            <path d="M421 414C425 407 434 403 446 402M421 414L446 413L469 417M428 412L444 405"/>
            <path d="M433 433C438 428 444 426 452 425M433 433L458 434L476 441"/>
          </g>
          <g stroke="#656563" stroke-width=".7" opacity=".6">
            <path d="M409 322.500L441 318.500L464 320.500M408 358.500L440 356.500L463 358.500M412 390.500L443 388.500L464 390.500M421 415.500L446 414.500L469 418.500M427 279L453 280.500L472 283.500"/>
            <path d="M399 338L402 347L398.500 356L403 364L400.500 372L405 380L403.500 388L409 394L409.500 401L415 406L417 413L424 418" stroke-dasharray="2 3"/>
            <path d="M442 345C443 375 449 404 464 436"/>
          </g>
          <g stroke="#060606" stroke-width="1.900">
            <path d="M449 131l11 2M440 138l12 1M430 148l12 0M424 158l12 0M415 170l12 1M407 185l12 0M400 201l12 0M392 218l12 1M386 236l12 0M380 256l11 0M375 275l11 1M370 294l12 1M368 313l11 1M367 331l11 1M367 348l11 2M368 365l10 2M371 380l9 2M376 393l9 3M383 404l8 4"/>
            <path d="M493 196l16 6M478 227l14 2M463 264l15 1M453 301l15 2M449 340l15 1M449 374l15 1M453 404l13 2M461 426l13 2M508 169l15 6M532 153l11 7M553 146l11 7M573 149l6 7M521 159l11 8M543 149l10 7M563 146l9 6M484 212l13 3M471 433l10 5M486 439l8 6"/>
          </g>
        </g>
        <path d="M577 149C590 151 597 166 601 180C607 198 611 220 610.500 243C610 262 608 276 606 286C601 312 597 330 589 350C584 363 577 376 569 389C558 405 546 420 533 431C522 440 511 448 503 447C492 446 484 440 477 425C466 403 463 378 463.500 353C464 330 469 305 474 287C481 259 492 231 505 206C524 172 547 147 577 149Z" fill="url(#side)"/>
        <path d="M577 152C549 151 526 177 508 210C491 243 479 275 472 310C466 346 468 385 479 415" fill="none" stroke="#4b4b4a" stroke-width="3" opacity=".5"/>
        <path d="M577 149C547 147 524 172 505 206C492 231 481 259 474 287C469 305 464 330 463.500 353C463 378 466 403 477 425C484 440 492 446 503 447" fill="none" stroke="#0d0d0d" stroke-width="1.200"/>
        <ellipse cx="536.500" cy="298" rx="52" ry="122" transform="rotate(15 536.500 298)" fill="#2e2e2d" stroke="#111" stroke-width="1"/>
        <ellipse cx="534.500" cy="297" rx="48" ry="116" transform="rotate(14 534.500 297)" fill="#363635" stroke="#111" stroke-width="1"/>
        <ellipse cx="532" cy="296" rx="44" ry="110" transform="rotate(14 532 296)" fill="url(#deck)" stroke="#0a0a0a" stroke-width="2.500"/>
        <g clip-path="url(#hole)">
          <path d="M560 180C540 182 522 200 514 220C505 240 500 262 496 282C490 310 483 330 474 350L470 410L484 380C500 350 512 320 518 285C524 262 524 240 527 200Z" fill="url(#bead)"/>
          <path d="M526 200C525 230 525 260 518 287C511 318 498 348 476 378" fill="none" stroke="#0d0d0d" stroke-width="1.200"/>
          <path d="M535 190C514 206 504 236 498 270C494 300 486 328 474 350" fill="none" stroke="#161616" stroke-width="6"/>
          <path d="M514 216C507 245 502 262 499 278C494 304 487 326 478 342" fill="none" stroke="#444" stroke-width=".6"/>
        </g>
        <path d="M501 244C490 268 482 300 479 337C484 331 492 306 496 281Z" fill="#fff"/>
        <path d="M584 240C580 290 562 345 533 380C522 394 508 404 496 396C484 389 479 370 478 350" fill="none" stroke="#0a0a0a" stroke-width="2.500"/>
        <use href="#outline" fill="none" stroke="#111" stroke-width=".8"/>
        <text class="planename" transform="translate(528 219) rotate(14)">Płaszczyzna2</text>
        <g class="triad">
          <path d="M147 484V473" stroke="#1b9a2b" stroke-width="1.500"/><path d="M144.800 474.500l2.700-6 2.500 6z" fill="#127a20"/>
          <path d="M147 484l9 2" stroke="#c11" stroke-width="1.500"/><path d="M153 483.300l7 3-7.500 1.500z" fill="#b11"/>
          <path d="M147 484l-5 2" stroke="#1616c8" stroke-width="1.500"/><path d="M144.500 483.800l-6.500 2.500 5.500 2z" fill="#1212b0"/>
          <text x="147" y="465" fill="#3ba64b">Y</text><text x="162" y="488" fill="#d55">X</text><text x="136" y="488" fill="#2222cc">Z</text>
        </g>
      </svg>
      <div class="hud">
        <button><svg class="i12"><use href="#zoomfit"/></svg></button><button><svg class="i12"><use href="#zoomarea"/></svg></button><button><svg class="i12"><use href="#prevview"/></svg></button><button><svg class="i12"><use href="#section"/></svg></button><button><svg class="i12"><use href="#annview"/></svg></button>
        <button class="dd"><svg class="i12"><use href="#orient"/></svg><svg class="i5"><use href="#arr"/></svg></button><button class="dd"><svg class="i12"><use href="#display"/></svg><svg class="i5"><use href="#arr"/></svg></button><button class="dd"><svg class="i12"><use href="#eye"/></svg><svg class="i5"><use href="#arr"/></svg></button>
        <button><svg class="i12"><use href="#ballp"/></svg></button><button class="dd"><svg class="i12"><use href="#scene"/></svg><svg class="i5"><use href="#arr"/></svg></button><button class="dd"><svg class="i12"><use href="#monitor"/></svg><svg class="i5"><use href="#arr"/></svg></button>
      </div>
      <button class="handle" aria-label="Zwiń panel"><i></i></button>
      <div class="docctl">
        <button><svg class="i12"><use href="#dockl"/></svg></button><button><svg class="i12"><use href="#dockr"/></svg></button><button><svg class="i10"><use href="#min"/></svg></button><button><svg class="i10"><use href="#restore"/></svg></button><button><svg class="i10"><use href="#close"/></svg></button>
      </div>
      <nav class="taskpane">
        <button><svg class="i12"><use href="#globe"/></svg></button><button><svg class="i12"><use href="#home"/></svg></button><button><svg class="i12"><use href="#lib"/></svg></button><button><svg class="i12"><use href="#folder"/></svg></button><button><svg class="i12"><use href="#palette"/></svg></button><button class="on"><svg class="i10"><use href="#ball"/></svg></button><button><svg class="i12"><use href="#props"/></svg></button>
      </nav>
    </section>
  </div>
</main>

<nav class="mtabs">
  <div class="mnav"><button>|◂</button><button>◂</button><button>▸</button><button>▸|</button></div>
  <button class="on">Model</button><button>Widoki 3D</button><button>Badanie ruchu 1</button>
</nav>
<section class="filters">
  <i class="dots"></i>
  <button class="fl"><svg class="i12"><use href="#fg"/></svg></button><button class="fl"><svg class="i12"><use href="#fgs"/></svg></button><button class="fl"><svg class="i12"><use href="#fp"/></svg></button>
  <button class="fcur"><svg class="i12"><use href="#cursor"/></svg></button><button class="fdrop"><svg class="i5"><use href="#arr"/></svg></button>
  <button class="fset"><svg class="i12"><use href="#cursorset"/></svg></button>
  <i class="bar"></i>
  <div class="keys k10w"><button><svg class="i12"><use href="#k1"/></svg></button><button><svg class="i12"><use href="#k2"/></svg></button><button><svg class="i12"><use href="#k3"/></svg></button><button><svg class="i12"><use href="#k4"/></svg></button><button><svg class="i12"><use href="#k5"/></svg></button><button><svg class="i12"><use href="#k6"/></svg></button><button><svg class="i12"><use href="#k7"/></svg></button><button><svg class="i12"><use href="#k8"/></svg></button><button><svg class="i12"><use href="#k9"/></svg></button><button><svg class="i12"><use href="#k10"/></svg></button></div>
  <button class="fl"><svg class="i12"><use href="#k11"/></svg></button>
  <div class="keys k18w"><button><svg class="i12"><use href="#k12"/></svg></button><button><svg class="i12"><use href="#k13"/></svg></button><button><svg class="i12"><use href="#k14"/></svg></button><button><svg class="i12"><use href="#k15"/></svg></button><button><svg class="i12"><use href="#k16"/></svg></button><button><svg class="i12"><use href="#k17"/></svg></button><button><svg class="i12"><use href="#k18"/></svg></button><button><svg class="i12"><use href="#k19"/></svg></button><button><svg class="i12"><use href="#k20"/></svg></button><button><svg class="i12"><use href="#k21"/></svg></button><button><svg class="i12"><use href="#k22"/></svg></button><button><svg class="i12"><use href="#k23"/></svg></button><button><svg class="i12"><use href="#k24"/></svg></button><button><svg class="i12"><use href="#k25"/></svg></button><button><svg class="i12"><use href="#k26"/></svg></button><button><svg class="i12"><use href="#k27"/></svg></button><button><svg class="i12"><use href="#k28"/></svg></button><button><svg class="i12"><use href="#k29"/></svg></button></div>
  <i class="bar end"></i>
</section>
<footer class="status">
  <span>SOLIDWORKS Premium 2024 SP1.0</span>
  <span class="mode">Edycja Część</span>
  <button class="units">MMGS<svg class="i5"><use href="#arr"/></svg></button>
  <button class="tag" aria-label="Etykiety"><svg class="i10" viewBox="0 0 12 12"><ellipse cx="6" cy="6" rx="4.500" ry="3.500" fill="#eee" stroke="#555"/><path d="M2 3l8 7M5 3l5 4" stroke="#555" stroke-width=".8"/></svg></button>
</footer>
</body>
</html>
```
FILE: styles.css
```css
*{box-sizing:border-box}
body{margin:0;height:100vh;display:flex;flex-direction:column;background:#f6f6f6;color:#1c1c1c;font:6px/8px "Noto Sans","Open Sans",sans-serif;overflow:hidden}
button,input{font:inherit;color:inherit;border:0;background:none;padding:0;margin:0}
button{display:flex;align-items:center;justify-content:center;white-space:nowrap}
svg{display:block;flex:none}
.sprite{position:absolute;width:0;height:0}
.i5{width:5px;height:5px}
.i6{width:6px;height:6px}
.i8{width:8px;height:8px}
.i9{width:9px;height:9px}
.i10{width:10px;height:10px}
.i12{width:12px;height:12px}

.titlebar{flex:none;height:19px;display:flex;align-items:center;border-top:1px solid #dcdcdc;border-bottom:1px solid #d4d4d4}
.brand{width:66px;padding-left:2px;display:flex;align-items:center;color:#d5281e}
.ds{width:12px;height:12px;margin-right:2px}
.solid{font-weight:bold;font-style:italic;font-size:7px}
.works{font-style:italic;font-size:7px}
.more{width:10px;height:17px;border-right:1px solid #e6e6e6}
.quick{display:flex;align-items:center;padding-left:11px}
.ic{width:16px}
.pairs{width:141px;display:grid;grid-template-columns:repeat(6,1fr);margin-left:1px}
.pairs button{gap:4px}
.sel{width:16px;height:17px;background:#b4b4b4;border:1px solid #999}
.seldrop{width:7px;height:17px;background:#d6d6d6;border:1px solid #b0b0b0;border-left:0}
.geard{width:8px}
.doc{flex:1;margin:0;padding-left:184px;font-size:6px;font-weight:normal;white-space:nowrap}
.search{width:130px;height:13px;display:flex;align-items:center;gap:4px;background:#fff;border:1px solid #ccc;padding:0 2px}
.search input{flex:1;min-width:0}
.search input::placeholder{color:#666;opacity:1}
.dim{opacity:.5}
.winctl{display:flex;width:117px;padding-left:3px}
.winctl button{flex:1}

.ribbon{flex:none;height:43px;display:flex;border-bottom:1px solid #c8c8c8}
.rgroup{display:flex;border-right:1px solid #e2e2e2}
.rb{flex-direction:column;justify-content:flex-start;padding-top:2px;text-align:center;line-height:7px}
.rb span{margin-top:2px}
.rb[disabled]{color:#c4c4c4}
.w24{width:24px}
.w26{width:26px}
.w35{width:35px}
.w42{width:43px}
.w46{width:46px}
.rdrop{margin-top:4px}
.last{padding-left:1px;border:0}
.collapse{margin-left:auto;align-self:flex-end;width:15px;height:14px;border-right:1px solid #aaa}

.work{flex:1;min-height:0;display:flex;flex-direction:column;background:#fff}
.tabs{flex:none;height:12px;display:flex}
.tabs button{min-width:29px;height:12px;padding:0 4px;background:#d2d2d2;border-right:1px solid #a4a4a4;border-bottom:1px solid #bbb}
.tabs .on{padding:0 2px;background:#f7f7f7;font-weight:bold;border-bottom-color:#f7f7f7}
.split{flex:1;min-height:0;display:flex}
.panel{width:125px;flex:none;display:flex;flex-direction:column;background:#f6f6f6;border-right:1px solid #a2a2a2}
.grip{height:10px;display:flex;align-items:center;justify-content:center;border-bottom:1px solid #d8d8d8}
.grip i{width:3px;height:3px;border:1px solid #aaa;border-radius:50%}
.ptabs{height:16px;display:flex;padding-top:2px}
.ptabs button{width:21px;background:#d2d2d2;border-right:1px solid #a8a8a8;border-bottom:1px solid #bbb}
.ptabs .on{background:#f6f6f6;border-bottom-color:#f6f6f6}
.ptabs .pmore{width:auto;margin-left:auto;padding-right:1px;background:none;border:0}
.filter{height:14px;margin:0 1px;padding-left:1px;display:flex;align-items:center;background:#f9f9f9;border:1px solid #d6d6d6}
.treebox{flex:1;min-height:0;display:flex}
.tree{width:117px;display:flex;flex-direction:column;border-bottom:2px solid #4a95c5}
.row{flex:1;min-height:0;display:flex;align-items:center;white-space:nowrap}
.row b{flex:none;width:13px;padding-left:3px}
.row span{padding-left:3px}
.row.kid b{width:25px}
.picked{display:flex;align-items:center;height:12px;padding-right:1px;background:#9cc7e2;border:1px solid #5b9dc6;margin-left:-1px}
.vbar{width:2px;margin:30px 2px 6px auto;background:#8b8b8b}
.hbar{height:12px;padding:7px 0 0 8px}
.hbar i{display:block;width:51px;height:2px;background:#a5a5a5}

.view{flex:1;min-width:0;position:relative;background:#fff;border-bottom:1px solid #bcbcbc}
.canvas{width:100%;height:100%}
.planename{font:bold 12px Inter,"Noto Sans",sans-serif;fill:#8fa8f2}
.triad text{font:4px "Noto Sans",sans-serif}
.hud{position:absolute;top:2px;left:0;right:0;display:flex;justify-content:center}
.hud button{width:14px;height:13px}
.hud .dd{width:21px;gap:4px}
.handle{position:absolute;left:-1px;top:203px;width:6px;height:22px;background:#f6f6f6;border:1px solid #b0b0b0;border-left:0}
.handle i{width:3px;height:3px;border:1px solid #999;border-radius:50%}
.docctl{position:absolute;right:3px;top:-10px;display:flex;color:#999}
.docctl button{width:14px;height:13px}
.taskpane{position:absolute;right:0;top:28px;width:14px;border:1px solid #999;border-right:0}
.taskpane button{width:13px;height:13px;background:#d6d6d6;border-bottom:1px solid #aaa}
.taskpane button:last-child{border-bottom:0}
.taskpane .on{background:#fff}

.mtabs{flex:none;height:9px;display:flex;padding-left:14px}
.mtabs>button{padding:0 5px;background:#d4d4d4;border-right:1px solid #aaa}
.mtabs .on{background:#f6f6f6;font-weight:bold;border:0;padding:0 6px}
.mnav{width:35px;display:flex;background:#b9b9b9;color:#999}
.mnav button{flex:1;border-right:1px solid #a8a8a8}
.filters{flex:none;height:17px;display:flex;align-items:center;border-bottom:1px solid #c6c6c6}
.dots{width:2px;height:14px;margin:0 5px 0 2px;border-left:1px dotted #999}
.fl{width:14px}
.fcur{width:15px;height:14px;background:#bcbcbc;border:1px solid #999}
.fdrop{width:6px;height:14px;background:#eee;border:1px solid #bbb;border-left:0}
.fset{width:16px}
.bar{width:4px;height:14px;border-right:1px solid #bbb}
.keys{display:flex;background:#b2b2b2;border:1px solid #8f8f8f}
.keys button{flex:1;height:12px;border-right:1px solid #8f8f8f}
.keys button:last-child{border-right:0}
.k10w{width:144px;margin-left:1px}
.k18w{width:259px}
.end{height:17px}
.status{flex:none;height:10px;display:flex;align-items:center;padding:0 1px}
.mode{margin-left:auto;width:109px}
.units{width:50px;justify-content:flex-start;gap:18px}
.tag{width:16px;padding-right:3px}
```
